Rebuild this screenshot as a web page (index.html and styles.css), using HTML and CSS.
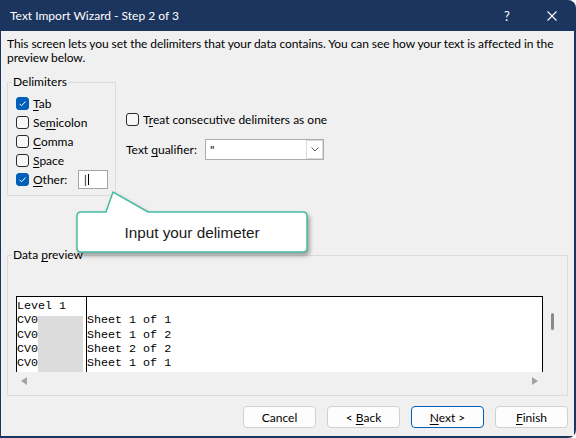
FILE: index.html
```html
<!DOCTYPE html>
<html lang="en">
<head>
  <meta charset="UTF-8">
  <meta name="viewport" content="width=device-width, initial-scale=1.0">
  <title>Text Import Wizard - Step 2 of 3</title>
  <link rel="stylesheet" href="styles.css">
</head>
<body>
  <div class="window">
    <div class="titlebar">
      <span class="title">Text Import Wizard - Step 2 of 3</span>
      <span class="help">?</span>
      <svg class="close" width="10" height="10" viewBox="0 0 10 10">
        <path d="M0.5 0.5 L9.5 9.5 M9.5 0.5 L0.5 9.5" stroke="#fff" stroke-width="1.1" fill="none"/>
      </svg>
    </div>

    <div class="client">
      <p class="intro">This screen lets you set the delimiters that your data contains. You can see how your text is affected in the preview below.</p>

      <div class="options">
        <fieldset class="delimiters">
          <legend>Delimiters</legend>
          <label class="check-row">
            <span class="box checked"><svg width="11" height="11" viewBox="0 0 11 11"><path d="M2.5 5.8 L4.5 7.8 L8.5 3.5" stroke="#fff" stroke-width="1" fill="none"/></svg></span>
            <span><u>T</u>ab</span>
          </label>
          <label class="check-row">
            <span class="box"></span>
            <span>Se<u>m</u>icolon</span>
          </label>
          <label class="check-row">
            <span class="box"></span>
            <span><u>C</u>omma</span>
          </label>
          <label class="check-row">
            <span class="box"></span>
            <span><u>S</u>pace</span>
          </label>
          <label class="check-row">
            <span class="box checked"><svg width="11" height="11" viewBox="0 0 11 11"><path d="M2.5 5.8 L4.5 7.8 L8.5 3.5" stroke="#fff" stroke-width="1" fill="none"/></svg></span>
            <span class="other-label"><u>O</u>ther:</span>
            <span class="field">|<span class="caret"></span></span>
          </label>
        </fieldset>

        <div class="side">
          <label class="check-row">
            <span class="box"></span>
            <span>T<u>r</u>eat consecutive delimiters as one</span>
          </label>
          <div class="qualifier">
            <span class="qualifier-label">Text <u>q</u>ualifier:</span>
            <div class="select">
              <span class="select-value">"</span>
              <span class="select-btn">
                <svg width="8" height="5" viewBox="0 0 8 5"><path d="M0.5 0.5 L4 4 L7.5 0.5" stroke="#5a5a5a" stroke-width="1" fill="none"/></svg>
              </span>
            </div>
          </div>
        </div>
      </div>

      <fieldset class="preview-group">
        <legend>Data <u>p</u>review</legend>
        <div class="preview">
          <div class="sheet">
            <div class="col col-first">
              <div>Level 1</div>
              <div>CV0</div>
              <div>CV0</div>
              <div>CV0</div>
              <div>CV0</div>
              <span class="redact"></span>
            </div>
            <div class="col">
              <div>&nbsp;</div>
              <div>Sheet 1 of 1</div>
              <div>Sheet 1 of 2</div>
              <div>Sheet 2 of 2</div>
              <div>Sheet 1 of 1</div>
            </div>
          </div>
          <div class="vscroll"><span class="thumb"></span></div>
          <div class="hscroll">
            <span class="arrow arrow-left"></span>
            <span class="arrow arrow-right"></span>
          </div>
        </div>
      </fieldset>

      <div class="buttons">
        <button>Cancel</button>
        <button>&lt; <u>B</u>ack</button>
        <button class="btn-default"><u>N</u>ext &gt;</button>
        <button><u>F</u>inish</button>
      </div>

      <!-- hint bubble pointing at the Other field -->
      <div class="callout">
        <svg class="callout-shape" width="245" height="74" viewBox="0 0 245 74">
          <path d="M9 26 L34 26 L41 6 L76 26 L231 26 Q235 26 235 30 L235 62 Q235 66 231 66 L9 66 Q5 66 5 62 L5 30 Q5 26 9 26 Z"
                fill="#fff" stroke="#45bc9f" stroke-width="1.5"/>
        </svg>
        <div class="callout-text">Input your delimeter</div>
      </div>
    </div>
  </div>
</body>
</html>
```

FILE: styles.css
```css
* {
  box-sizing: border-box;
}

body {
  margin: 0;
  background: #fff;
  font-family: Lato, "Noto Sans", sans-serif;
  font-size: 12px;
  color: #000;
}

.window {
  width: 576px;
  height: 438px;
  background: #1c355e;
  border-radius: 0 8px 8px 0;
  padding: 0 2px 2px 1px;
  display: flex;
  flex-direction: column;
}

.titlebar {
  height: 31px;
  flex: none;
  display: flex;
  align-items: center;
  padding-left: 9px;
  color: #fff;
}

.title {
  flex: 1;
}

.help {
  width: 12px;
  text-align: center;
  font-size: 13px;
  margin-right: 34px;
}

.close {
  margin-right: 17px;
}

.client {
  flex: 1;
  min-height: 0;
  position: relative;
  background: #f0f0f0;
  padding: 6px 6px 0 6px;
  display: flex;
  flex-direction: column;
}

.intro {
  margin: 0;
  line-height: 14px;
  letter-spacing: -0.08px;
}

u {
  text-decoration-thickness: 1px;
  text-underline-offset: 2px;
}

/* group boxes */
fieldset {
  margin: 0;
  border: 1px solid #dcdcdc;
  min-width: 0;
}

legend {
  padding: 0 1px;
  margin-left: -4px;
  line-height: 14px;
}

.options {
  display: flex;
  align-items: flex-start;
  margin-top: 10px;
}

.delimiters {
  width: 109px;
  padding: 5px 0 6px 8px;
}

.check-row {
  display: flex;
  align-items: center;
  gap: 4px;
  height: 19px;
  white-space: nowrap;
}

.box {
  width: 13px;
  height: 13px;
  flex: none;
  border: 1px solid #2b2b2b;
  border-radius: 3px;
  background: #f7f7f7;
  display: flex;
  align-items: center;
  justify-content: center;
}

.box.checked {
  background: #005fb8;
  border-color: #005fb8;
}

.other-label {
  width: 41px;
}

.field {
  width: 30px;
  height: 19px;
  border: 1px solid #a4a4a4;
  background: #fff;
  padding-left: 5px;
  display: flex;
  align-items: center;
  font-size: 11px;
}

.caret {
  width: 1px;
  height: 11px;
  margin-left: 1px;
  background: #000;
}

.side {
  margin: 35px 0 0 10px;
}

.qualifier {
  display: flex;
  align-items: center;
  height: 21px;
  margin-top: 10px;
}

.qualifier-label {
  width: 79px;
}

.select {
  width: 119px;
  height: 21px;
  border: 1px solid #ababab;
  background: #fff;
  display: flex;
  align-items: center;
  padding-left: 4px;
}

.select-btn {
  margin-left: auto;
  width: 17px;
  height: 19px;
  border: 1px solid #dadada;
  display: flex;
  align-items: center;
  justify-content: center;
}

/* data preview */
.preview-group {
  margin-top: 52px;
  padding: 34px 0 5px 8px;
}

.preview {
  display: grid;
  grid-template-columns: 527px 18px;
  grid-template-rows: 76px 18px;
}

.sheet {
  display: flex;
  overflow: hidden;
  background: #fff;
  border: 1px solid #000;
  border-bottom: 0;
  font-family: "Liberation Mono", monospace;
  font-size: 11.7px;
  line-height: 14.25px;
  white-space: nowrap;
}

.col {
  padding-top: 2px;
}

.col-first {
  position: relative;
  width: 70px;
  border-right: 1px solid #000;
}

.redact {
  position: absolute;
  left: 21px;
  top: 19px;
  bottom: 0;
  width: 45px;
  background: #dcdcdc;
}

.vscroll {
  padding: 17px 0 0 8px;
}

.thumb {
  display: block;
  width: 3px;
  height: 17px;
  border-radius: 2px;
  background: #8a8a8a;
}

.hscroll {
  display: flex;
  align-items: center;
  justify-content: space-between;
  padding: 0 5px;
}

.arrow {
  width: 0;
  height: 0;
  border-top: 4px solid transparent;
  border-bottom: 4px solid transparent;
}

.arrow-left {
  border-right: 6px solid #a3a3a3;
}

.arrow-right {
  border-left: 6px solid #a3a3a3;
}

/* dialog buttons */
.buttons {
  display: flex;
  justify-content: flex-end;
  gap: 11px;
  margin-top: 10px;
}

button {
  width: 73px;
  height: 22px;
  padding: 0;
  font: inherit;
  color: #000;
  background: #fdfdfd;
  border: 1px solid #d0d0d0;
  border-radius: 4px;
}

.btn-default {
  border-color: #005fb8;
}

/* hint bubble */
.callout {
  position: absolute;
  left: 71px;
  top: 155px;
  width: 245px;
  height: 74px;
}

.callout-shape {
  position: absolute;
  left: 0;
  top: 0;
  filter: drop-shadow(2px 3px 2px rgba(0, 0, 0, 0.35));
}

.callout-text {
  position: relative;
  margin: 26px 0 0 5px;
  width: 230px;
  height: 40px;
  line-height: 41px;
  text-align: center;
  font-family: "Liberation Sans", Arial, sans-serif;
  font-size: 15.3px;
  color: #1a1a1a;
}
```
